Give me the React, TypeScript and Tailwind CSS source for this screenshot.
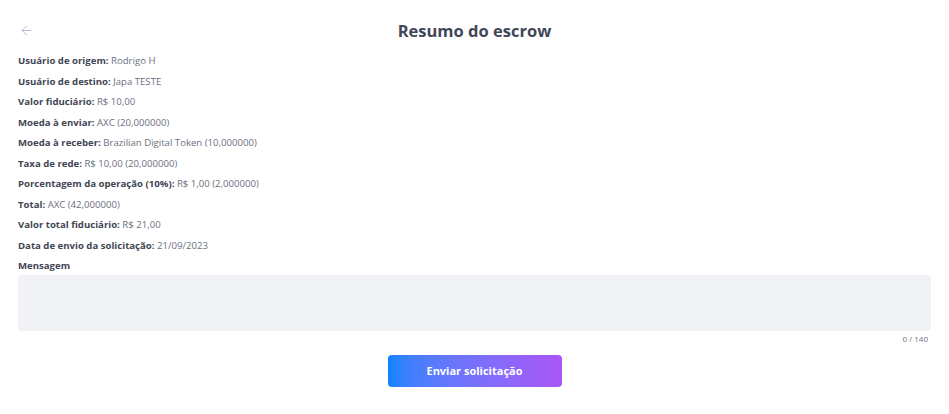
import { ArrowLeft } from 'lucide-react'

const rows: [string, string][] = [
  ['Usuário de origem:', 'Rodrigo H'],
  ['Usuário de destino:', 'Japa TESTE'],
  ['Valor fiduciário:', 'R$ 10,00'],
  ['Moeda à enviar:', 'AXC (20,000000)'],
  ['Moeda à receber:', 'Brazilian Digital Token (10,000000)'],
  ['Taxa de rede:', 'R$ 10,00 (20,000000)'],
  ['Porcentagem da operação (10%):', 'R$ 1,00 (2,000000)'],
  ['Total:', 'AXC (42,000000)'],
  ['Valor total fiduciário:', 'R$ 21,00'],
  ['Data de envio da solicitação:', '21/09/2023'],
]

export default function App() {
  return (
    <div className="min-h-[414px] w-[949px] bg-white font-['Open_Sans',sans-serif]">
      <div className="rounded-b-md bg-white px-[18px] pb-[26px] pt-[19px]">
        {/* Header */}
        <div className="relative flex h-[24px] items-center justify-center">
          <button className="absolute left-[1px] top-[4px] text-[#b9bdd6]" aria-label="Voltar">
            <ArrowLeft size={15} strokeWidth={1.6} />
          </button>
          <h1 className="text-[16.5px] font-bold text-[#404657]">Resumo do escrow</h1>
        </div>

        {/* Details */}
        <div className="mt-[8px] flex flex-col">
          {rows.map(([label, value]) => (
            <p key={label} className="h-[20.5px] text-[9.6px] leading-[20.5px] text-[#6b7080]">
              <span className="font-bold text-[#414654]">{label}</span> {value}
            </p>
          ))}
        </div>

        <label className="block h-[19px] text-[9.6px] font-bold leading-[20px] text-[#414654]">Mensagem</label>
        <textarea
          className="block h-[56px] w-full resize-none rounded-[4px] bg-[#f1f2f6] px-3 py-2 text-[10px] outline-none"
          maxLength={140}
        />
        <div className="mt-[2px] pr-[3px] text-right text-[8px] text-[#6b7080]">0 / 140</div>

        <div className="mt-[10px] flex justify-center">
          <button className="h-[32px] w-[174px] rounded-[4px] bg-gradient-to-r from-[#0a84ff] to-[#a855f7] text-[11px] font-bold text-white">
            Enviar solicitação
          </button>
        </div>
      </div>
    </div>
  )
}
